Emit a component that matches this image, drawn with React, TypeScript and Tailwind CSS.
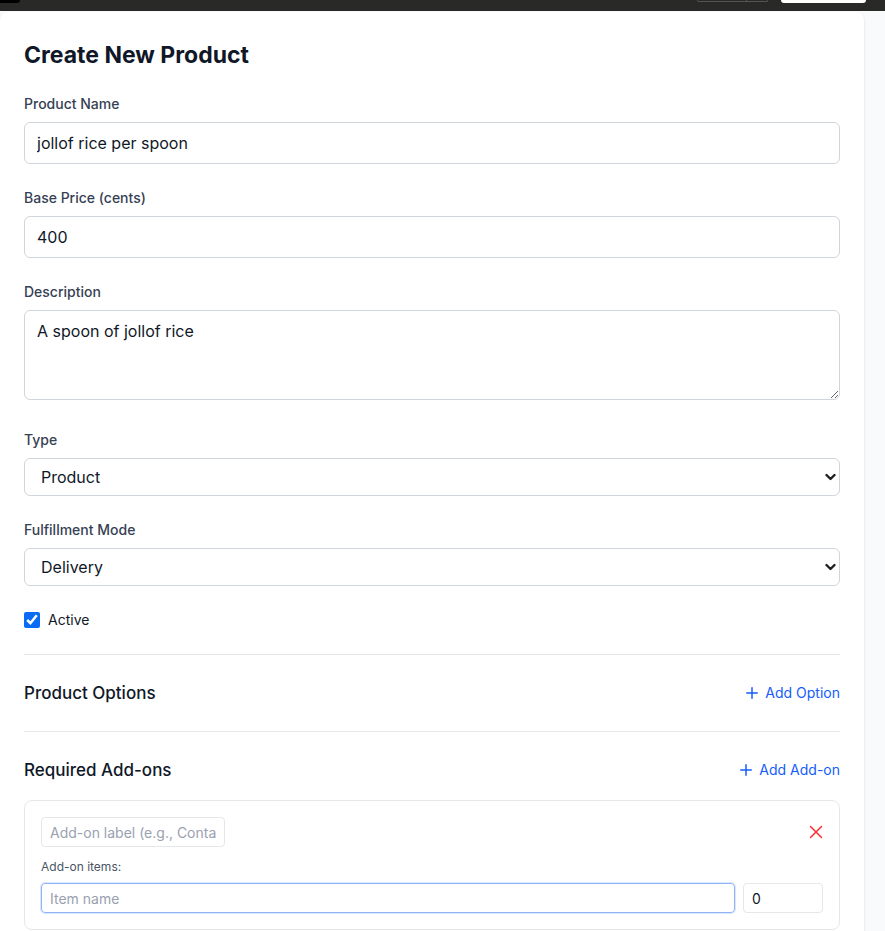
import { Plus, X } from "lucide-react";

function Field({ label, children, className = "" }: { label: string; children: React.ReactNode; className?: string }) {
  return (
    <div className={className}>
      <label className="mb-2 block text-sm font-medium leading-5 text-gray-700">{label}</label>
      {children}
    </div>
  );
}

function Select({ value, options }: { value: string; options: string[] }) {
  return (
    <div className="relative">
      <select
        defaultValue={value}
        className="block h-[38px] w-full appearance-none rounded-md border border-gray-300 bg-white pl-4 pr-8 text-base text-gray-900 outline-none"
      >
        {options.map((o) => <option key={o}>{o}</option>)}
      </select>
      <svg className="pointer-events-none absolute right-[4px] top-1/2 -translate-y-1/2" width="11" height="8" viewBox="0 0 11 8">
        <polyline points="1.5,2 5.5,6 9.5,2" fill="none" stroke="#1f1f1f" strokeWidth="2.4" strokeLinecap="round" strokeLinejoin="round" />
      </svg>
    </div>
  );
}

function SectionHead({ title, action }: { title: string; action: string }) {
  return (
    <div className="flex items-center justify-between">
      <h2 className="text-[17px] font-medium leading-7 text-gray-900">{title}</h2>
      <button className="flex items-center gap-1 text-sm text-blue-600">
        <Plus size={18} strokeWidth={2} />
        {action}
      </button>
    </div>
  );
}

export default function App() {
  const input = "block h-[42px] w-full rounded-md border border-gray-300 bg-white px-3 text-base text-gray-900 outline-none";
  return (
    <div className="min-h-[931px] bg-gray-50 font-['Inter',sans-serif]">
      <div className="flex h-[11px] items-start justify-between bg-[#292927]">
        <div className="h-[3px] w-[20px] rounded-br bg-black" />
        <div className="mr-[19px] flex items-start gap-[13px]">
          <div className="flex h-[2px] w-[71px] rounded-b border border-t-0 border-[#555]">
            <div className="w-[49px] border-r border-[#555]" />
          </div>
          <div className="h-[3px] w-[85px] rounded-b-md bg-white" />
        </div>
      </div>

      <div className="mt-px w-[864px] rounded-lg bg-white px-6 pt-[27px] shadow-sm">
        <h1 className="mb-[23px] text-[23px] font-bold leading-8 text-gray-900">Create New Product</h1>

        <div className="space-y-6">
          <Field label="Product Name">
            <input className={input} defaultValue="jollof rice per spoon" />
          </Field>
          <Field label="Base Price (cents)">
            <input className={input} defaultValue="400" />
          </Field>
          <Field label="Description" className="pb-[6px]">
            <textarea
              rows={3}
              spellCheck={false}
              className="block h-[90px] w-full rounded-md border border-gray-300 px-3 py-2 text-base leading-6 text-gray-900 outline-none"
              defaultValue="A spoon of jollof rice"
            />
          </Field>
          <Field label="Type">
            <Select value="Product" options={["Product", "Service"]} />
          </Field>
          <Field label="Fulfillment Mode">
            <Select value="Delivery" options={["Delivery", "Pickup"]} />
          </Field>
          <label className="flex h-5 items-center gap-2 text-sm text-gray-900">
            <input type="checkbox" defaultChecked className="h-4 w-4 accent-[#0a6cf5]" />
            Active
          </label>

          <div className="border-t border-gray-200 pt-6">
            <SectionHead title="Product Options" action="Add Option" />
          </div>

          <div className="border-t border-gray-200 pt-6">
            <SectionHead title="Required Add-ons" action="Add Add-on" />
            <div className="mt-4 rounded-lg border border-gray-200 p-4">
              <div className="mb-3 flex items-center justify-between">
                <input
                  placeholder="Add-on label (e.g., Container)"
                  className="h-[30px] w-[184px] rounded border border-gray-200 px-2 text-sm text-gray-900 outline-none placeholder:text-gray-400"
                />
                <button className="-mr-1 text-red-500">
                  <X size={22} strokeWidth={1.6} />
                </button>
              </div>
              <div className="mb-2 text-xs leading-4 text-gray-600">Add-on items:</div>
              <div className="flex gap-2">
                <input
                  autoFocus
                  placeholder="Item name"
                  className="h-[30px] flex-1 rounded border border-[#8fb5f6] px-2 text-sm text-gray-900 outline-none ring-1 ring-[#dbe7fd] placeholder:text-gray-400"
                />
                <input
                  defaultValue="0"
                  className="h-[30px] w-[80px] rounded border border-gray-200 px-2 text-sm text-gray-900 outline-none"
                />
              </div>
            </div>
          </div>
        </div>
        <div className="h-6" />
      </div>
    </div>
  );
}
